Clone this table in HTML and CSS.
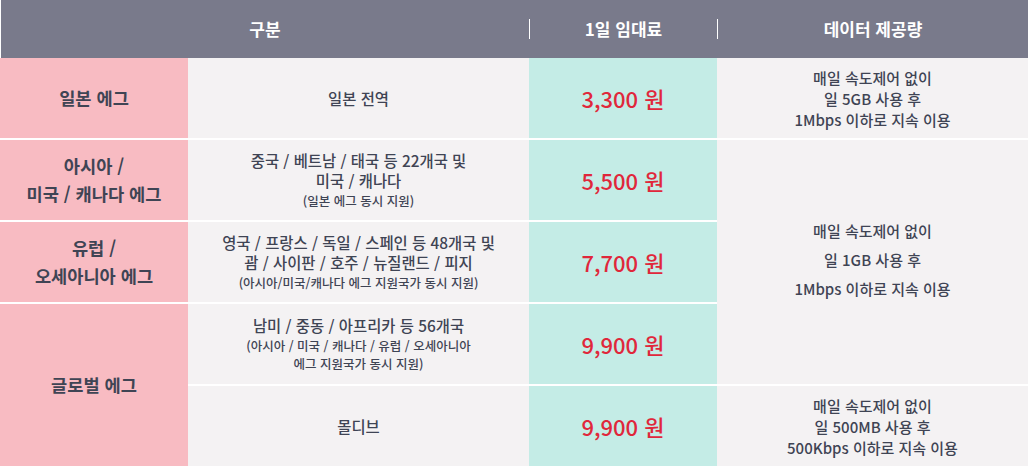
FILE: index.html
```html
<!DOCTYPE html>
<html lang="ko">
<head>
<meta charset="utf-8">
<link rel="stylesheet" href="styles.css">
</head>
<body>
<div class="table">
  <div class="head">
    <div class="hcell"><span>구분</span></div>
    <div class="hcell"><span class="div">1일 임대료</span></div>
    <div class="hcell"><span class="div">데이터 제공량</span></div>
  </div>
  <div class="body">
    <div class="name r1">일본 에그</div>
    <div class="area r1"><p class="main">일본 전역</p></div>
    <div class="price r1">3,300 원</div>
    <div class="data r1"><p>매일 속도제어 없이<br>일 5GB 사용 후<br>1Mbps 이하로 지속 이용</p></div>

    <div class="name r2">아시아 /<br>미국 / 캐나다 에그</div>
    <div class="area r2"><p class="main">중국 / 베트남 / 태국 등 22개국 및<br>미국 / 캐나다</p><p class="sub">(일본 에그 동시 지원)</p></div>
    <div class="price r2">5,500 원</div>
    <div class="data merged"><p class="wide">매일 속도제어 없이<br>일 1GB 사용 후<br>1Mbps 이하로 지속 이용</p></div>

    <div class="name r3">유럽 /<br>오세아니아 에그</div>
    <div class="area r3"><p class="main">영국 / 프랑스 / 독일 / 스페인 등 48개국 및<br>괌 / 사이판 / 호주 / 뉴질랜드 / 피지</p><p class="sub">(아시아/미국/캐나다 에그 지원국가 동시 지원)</p></div>
    <div class="price r3">7,700 원</div>

    <div class="name global">글로벌 에그</div>
    <div class="area r4"><p class="main">남미 / 중동 / 아프리카 등 56개국</p><p class="sub">(아시아 / 미국 / 캐나다 / 유럽 / 오세아니아<br>에그 지원국가 동시 지원)</p></div>
    <div class="price r4">9,900 원</div>

    <div class="area r5"><p class="main">몰디브</p></div>
    <div class="price r5">9,900 원</div>
    <div class="data r5"><p>매일 속도제어 없이<br>일 500MB 사용 후<br>500Kbps 이하로 지속 이용</p></div>
  </div>
</div>
</body>
</html>
```

FILE: styles.css
```css
* { box-sizing: border-box; }
html, body { margin: 0; padding: 0; background: #ffffff; }
body {
  font-family: "Noto Sans CJK KR", "Noto Sans", sans-serif;
  color: #3f4454;
  width: 1028px;
  height: 466px;
  overflow: hidden;
}
p { margin: 0; }

.head {
  display: grid;
  grid-template-columns: 528px 188px 311px;
  height: 58px;
  margin-left: 1px;
  background: #797a8b;
  color: #ffffff;
  font-size: 17px;
  font-weight: 700;
}
.hcell {
  display: flex;
  align-items: center;
}
.hcell span {
  flex: 1;
  text-align: center;
  line-height: 20px;
}
.hcell span.div { border-left: 1px solid #ffffff; }

.body {
  display: grid;
  grid-template-columns: 188px 341px 188px 311px;
  grid-template-rows: repeat(5, 80px);
  row-gap: 2px;
}
.body > div {
  display: flex;
  flex-direction: column;
  align-items: center;
  justify-content: center;
  text-align: center;
}
.name {
  grid-column: 1;
  background: #f8bbc2;
  font-size: 17.6px;
  font-weight: 700;
  line-height: 28px;
}
.area {
  grid-column: 2;
  background: #f4f2f3;
  font-weight: 500;
}
.price {
  grid-column: 3;
  background: #c4ece6;
  color: #e0273b;
  font-size: 22px;
  font-weight: 500;
}
.data {
  grid-column: 4;
  background: #f4f2f3;
  font-size: 15px;
  font-weight: 500;
  line-height: 21px;
}
.data .wide { line-height: 29px; margin-top: -6px; }
.main { font-size: 15.4px; line-height: 20px; }
.sub { font-size: 12.5px; line-height: 18px; margin-top: 2px; }

.r1 { grid-row: 1; }
.r2 { grid-row: 2; }
.r3 { grid-row: 3; }
.r4 { grid-row: 4; }
.r5 { grid-row: 5; }
.merged { grid-row: 2 / 5; }
.global { grid-row: 4 / 6; }
```
